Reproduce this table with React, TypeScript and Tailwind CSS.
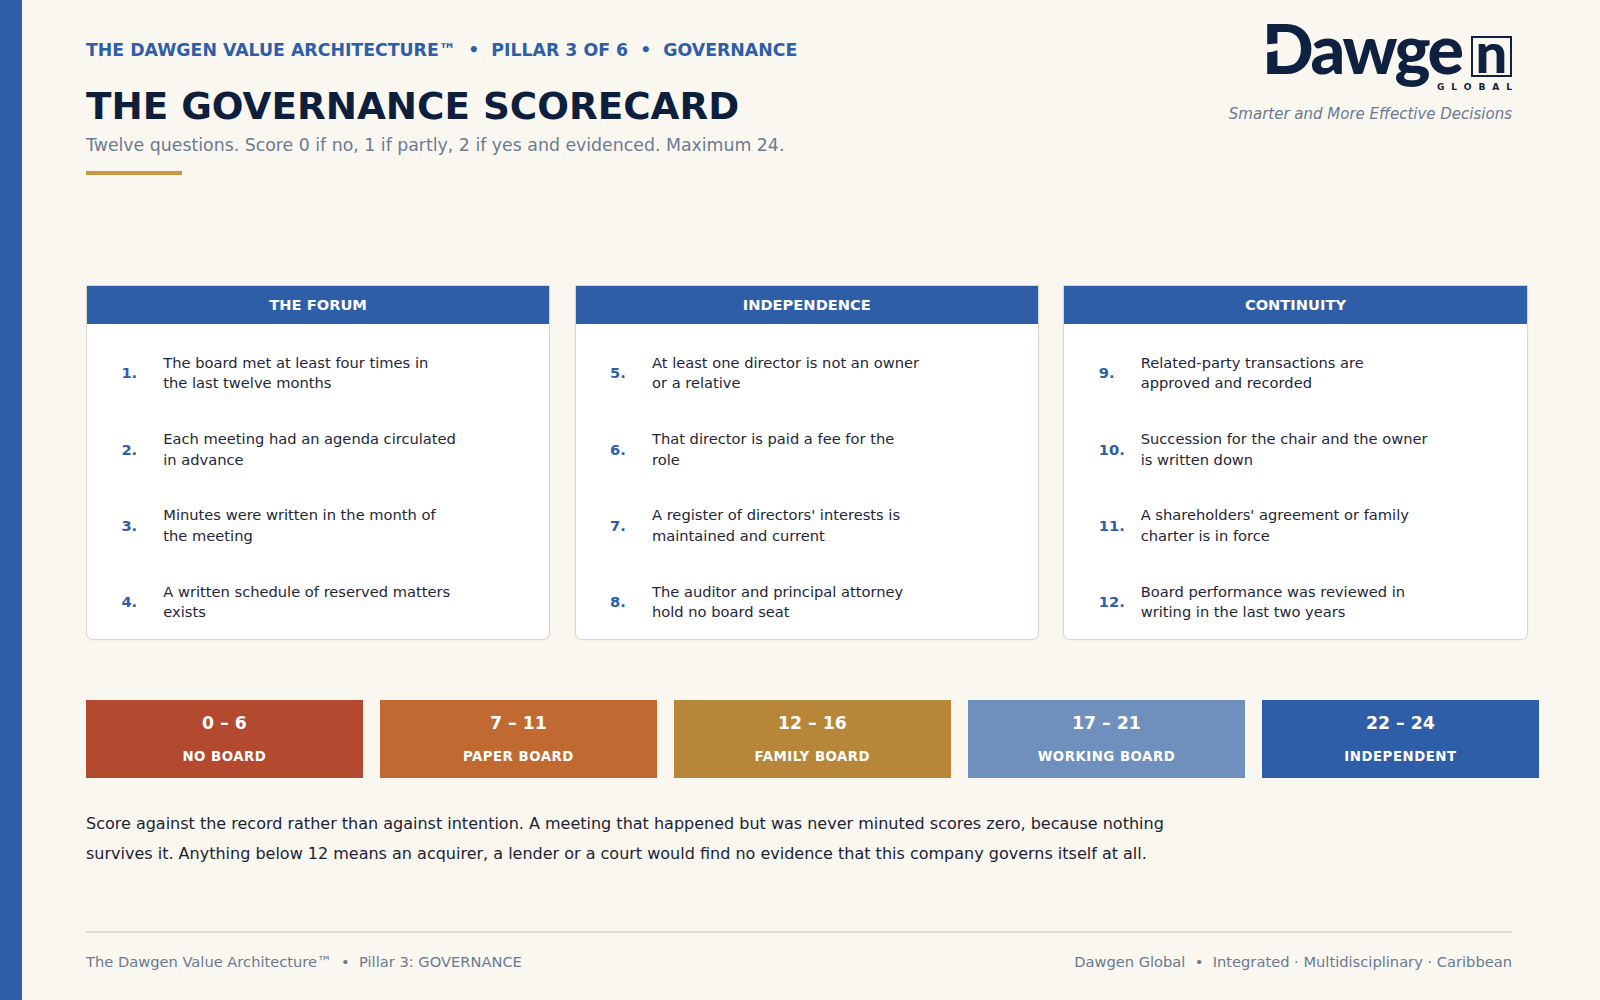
import React from "react";

const cards = [
  {
    title: "THE FORUM",
    items: [
      ["1.", "The board met at least four times in", "the last twelve months"],
      ["2.", "Each meeting had an agenda circulated", "in advance"],
      ["3.", "Minutes were written in the month of", "the meeting"],
      ["4.", "A written schedule of reserved matters", "exists"],
    ],
  },
  {
    title: "INDEPENDENCE",
    items: [
      ["5.", "At least one director is not an owner", "or a relative"],
      ["6.", "That director is paid a fee for the", "role"],
      ["7.", "A register of directors' interests is", "maintained and current"],
      ["8.", "The auditor and principal attorney", "hold no board seat"],
    ],
  },
  {
    title: "CONTINUITY",
    items: [
      ["9.", "Related-party transactions are", "approved and recorded"],
      ["10.", "Succession for the chair and the owner", "is written down"],
      ["11.", "A shareholders' agreement or family", "charter is in force"],
      ["12.", "Board performance was reviewed in", "writing in the last two years"],
    ],
  },
];

const bands = [
  { range: "0 – 6", label: "NO BOARD", cls: "bg-[#b3492f]" },
  { range: "7 – 11", label: "PAPER BOARD", cls: "bg-[#c06a31]" },
  { range: "12 – 16", label: "FAMILY BOARD", cls: "bg-[#b88638]" },
  { range: "17 – 21", label: "WORKING BOARD", cls: "bg-[#6f8fbd]" },
  { range: "22 – 24", label: "INDEPENDENT", cls: "bg-[#2e5ea8]" },
];

function Logo() {
  return (
    <div className="relative h-[124px] w-[247px] shrink-0">
      <div
        className="absolute left-[-3px] top-[21px] whitespace-nowrap text-[68px] font-black leading-[54px] tracking-[-2.5px] text-[#0f2140]"
        style={{ fontFamily: "Lato, 'DejaVu Sans', sans-serif" }}
      >
        Dawge
      </div>
      <svg className="absolute left-0 top-0" width="40" height="80" viewBox="0 0 40 80">
        <path d="M-1 44.5 L27 42.6 Q14 52.5 -1 52.6 Z" fill="#faf7f0" />
      </svg>
      <div className="absolute left-[206px] top-[36px] flex h-[41px] w-[41px] justify-center border-[2.5px] border-[#0f2140]">
        <span
          className="mt-[-3.7px] text-[56px] font-black leading-[36px] text-[#0f2140]"
          style={{ fontFamily: "Lato, 'DejaVu Sans', sans-serif" }}
        >
          n
        </span>
      </div>
      <div className="absolute right-[-7px] top-[81.5px] text-[9px] font-bold leading-[10px] tracking-[7px] text-[#0f2140]">
        GLOBAL
      </div>
      <div className="absolute right-0 top-[104px] whitespace-nowrap text-[15px] italic leading-[20px] text-[#6b7a90]">
        Smarter and More Effective Decisions
      </div>
    </div>
  );
}

export default function App() {
  return (
    <div
      className="flex h-[1000px] w-[1600px] overflow-hidden bg-[#faf7f0] text-[#1c2333]"
      style={{ fontFamily: "'DejaVu Sans', sans-serif" }}
    >
      <div className="w-[22px] shrink-0 bg-[#2e5ea8]" />
      <div className="flex flex-1 flex-col pl-[64px] pr-[88px]">
        <div className="flex items-start justify-between">
          <div>
            <div className="mt-[38px] text-[17.33px] font-bold leading-[24px] text-[#2e5ea8]">
              THE DAWGEN VALUE ARCHITECTURE™&nbsp;&nbsp;•&nbsp;&nbsp;PILLAR 3 OF 6&nbsp;&nbsp;•&nbsp;&nbsp;GOVERNANCE
            </div>
            <div className="mt-[22px] text-[37.33px] font-bold leading-[44px] text-[#0d1f3c]">THE GOVERNANCE SCORECARD</div>
            <div className="mt-[5px] text-[17.33px] leading-[24px] text-[#6b7b92]">
              Twelve questions. Score 0 if no, 1 if partly, 2 if yes and evidenced. Maximum 24.
            </div>
            <div className="mt-[14.4px] h-[4px] w-[96px] bg-[#c9973f]" />
          </div>
          <Logo />
        </div>

        <div className="mr-[-15.6px] mt-[109.3px] grid grid-cols-3 gap-[24.5px]">
          {cards.map((c) => (
            <div
              key={c.title}
              className="flex h-[355px] flex-col overflow-hidden rounded-b-[7px] border border-[#ddd5c6] bg-white shadow-[0_1px_2px_rgba(0,0,0,0.04)]"
            >
              <div className="-mx-px -mt-px flex h-[39.8px] shrink-0 items-center justify-center bg-[#2e5ea8] text-[14.67px] font-bold text-white">
                {c.title}
              </div>
              <div className="flex flex-col gap-[35.2px] pt-[28.5px]">
                {c.items.map((it) => (
                  <div key={it[0]} className="flex items-center">
                    <div className="w-[76.3px] shrink-0 pl-[34.4px] text-[14.67px] font-bold leading-[20px] text-[#2e5ea8]">
                      {it[0]}
                    </div>
                    <div className="text-[14.67px] leading-[20.5px] text-[#1f2637]">
                      {it[1]}
                      <br />
                      {it[2]}
                    </div>
                  </div>
                ))}
              </div>
            </div>
          ))}
        </div>

        <div className="mr-[-26.8px] mt-[60.2px] grid grid-cols-5 gap-[17.35px]">
          {bands.map((b) => (
            <div key={b.label} className={`flex h-[78.6px] flex-col items-center text-white ${b.cls}`}>
              <div className="mt-[12.5px] text-[17.33px] font-bold leading-[22px]">{b.range}</div>
              <div className="mt-[14.5px] text-[13.33px] font-bold leading-[16px] tracking-[0.5px]">{b.label}</div>
            </div>
          ))}
        </div>

        <div className="mt-[30.4px] max-w-[1120px] text-[16px] leading-[30.6px] text-[#1c2333]">
          Score against the record rather than against intention. A meeting that happened but was never minuted scores zero, because nothing survives it. Anything below 12 means an acquirer, a lender or a court would find no evidence that this company governs itself at all.
        </div>

        <div className="mt-[61.4px]">
          <div className="h-[2px] bg-[#e2dccf]" />
          <div className="mt-[18.5px] flex justify-between text-[14.67px] leading-[20px] text-[#6b7a90]">
            <span>The Dawgen Value Architecture™&nbsp;&nbsp;•&nbsp;&nbsp;Pillar 3: GOVERNANCE</span>
            <span>Dawgen Global&nbsp;&nbsp;•&nbsp;&nbsp;Integrated · Multidisciplinary · Caribbean</span>
          </div>
        </div>
      </div>
    </div>
  );
}
